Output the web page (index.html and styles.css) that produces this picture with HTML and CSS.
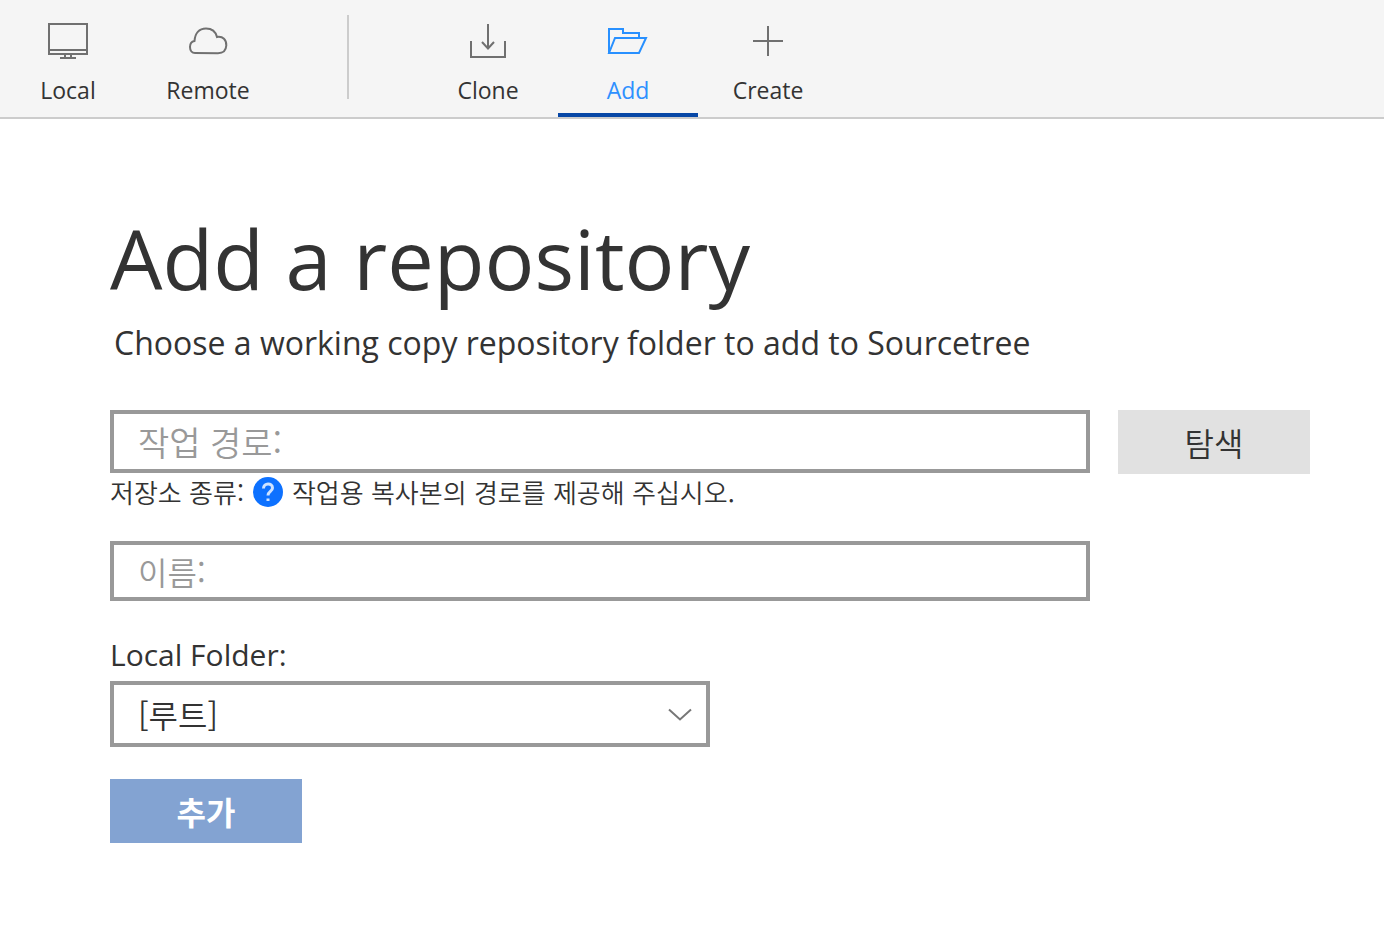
FILE: index.html
```
<!DOCTYPE html>
<html lang="ko">
<head>
    <meta charset="UTF-8">
    <meta name="viewport" content="width=device-width, initial-scale=1.0">
    <title>Sourcetree</title>
    <link rel="stylesheet" href="styles.css">
</head>
<body>
    <nav class="toolbar">
        <a class="tab" href="#local">
            <svg class="icon" width="48" height="40" viewBox="0 0 48 40">
                <path d="M5 4h38v30H5zM5 30h38M21 34v4M27 34v4M16 38h16"/>
            </svg>
            Local
        </a>
        <a class="tab" href="#remote">
            <svg class="icon" width="48" height="40" viewBox="0 0 48 40">
                <path d="M11 33C8 33 6 30.500 6 27C6 23.500 8 21.500 10.500 21C11 13.500 15 8.500 22 8.500C28 8.500 31.500 11 33 17C39 16 42.500 20 42.300 25.500C42 30.500 39 33.200 34 33.200Z"/>
            </svg>
            Remote
        </a>
        <div class="divider"></div>
        <a class="tab" href="#clone">
            <svg class="icon" width="48" height="40" viewBox="0 0 48 40">
                <path d="M7 21v16h34V21M24 4v25M18 22l6 6.500 6-6.500"/>
            </svg>
            Clone
        </a>
        <a class="tab active" href="#add">
            <svg class="icon" width="48" height="40" viewBox="0 0 48 40">
                <path d="M5 33V9h14v4h16v5M5 33l6-15h31l-7 15z"/>
            </svg>
            Add
        </a>
        <a class="tab" href="#create">
            <svg class="icon" width="48" height="40" viewBox="0 0 48 40">
                <path d="M24 6v30M9 21h30"/>
            </svg>
            Create
        </a>
    </nav>

    <main class="content">
        <h1>Add a repository</h1>
        <p class="subtitle">Choose a working copy repository folder to add to Sourcetree</p>

        <form class="repo-form">
            <div class="path-row">
                <input class="text-input path-input" type="text" id="path" aria-label="작업 경로" placeholder="작업 경로:">
                <button class="btn btn-browse" type="button">탐색</button>
            </div>
            <div class="repo-type">
                <span>저장소 종류:</span>
                <svg class="help" width="32" height="32" viewBox="0 0 32 32">
                    <circle cx="16" cy="16" r="15"/>
                    <path d="M11.500 12.500C11.500 6.500 20.500 6.500 20.500 12C20.500 15.500 16 15.500 16 19.500M16 22.500v2.500"/>
                </svg>
                <span>작업용 복사본의 경로를 제공해 주십시오.</span>
            </div>
            <div class="name-row">
                <input class="text-input" type="text" id="name" aria-label="이름" placeholder="이름:">
            </div>
            <label class="folder-label" for="folder">Local Folder:</label>
            <div class="select-wrap">
                <select class="folder-select" id="folder">
                    <option>[루트]</option>
                </select>
                <svg class="chevron" width="24" height="14" viewBox="0 0 24 14">
                    <path d="M1 1.500l11 10 11-10"/>
                </svg>
            </div>
            <button class="btn btn-add" type="submit">추가</button>
        </form>
    </main>
</body>
</html>
```
FILE: styles.css
```
* {
    box-sizing: border-box;
}
body {
    margin: 0;
    font-family: "Open Sans", "Noto Sans CJK KR", sans-serif;
    color: #333;
    background-color: #fff;
}
.toolbar {
    display: flex;
    padding-right: 20px;
    background-color: #f5f5f5;
    border-bottom: 2px solid #ccc;
}
.tab {
    display: flex;
    flex-direction: column;
    align-items: center;
    gap: 12px;
    width: 140px;
    padding-top: 20px;
    padding-bottom: 5px;
    border-bottom: 4px solid transparent;
    font-size: 23px;
    line-height: 36px;
    color: #333;
    text-decoration: none;
}
.tab:first-child {
    margin-left: -2px;
}
.tab.active {
    color: #2e90ff;
    border-bottom-color: #0747a6;
}
.icon {
    fill: none;
    stroke: #707070;
    stroke-width: 2;
}
.active .icon {
    stroke: #2890ff;
}
.divider {
    width: 2px;
    margin: 15px 69px 18px;
    background-color: #ccc;
}
.content {
    padding: 83px 74px 40px 110px;
}
h1 {
    margin: 0;
    font-size: 83px;
    font-weight: 400;
    line-height: 112px;
}
.subtitle {
    margin: 7px 0 45px 4px;
    font-size: 32px;
    line-height: 44px;
}
.repo-form {
    font-family: "Noto Sans CJK KR", sans-serif;
    font-weight: 350;
}
.path-row,
.name-row {
    display: grid;
    grid-template-columns: 1fr 192px;
    column-gap: 28px;
    align-items: start;
}
.text-input {
    width: 100%;
    height: 60px;
    padding: 0 24px;
    border: 4px solid #999;
    border-radius: 0;
    background-color: #fff;
    font-family: inherit;
    font-weight: inherit;
    font-size: 32px;
    color: #333;
}
.path-input {
    height: 63px;
    font-size: 34px;
}
.text-input::placeholder {
    color: #999;
    opacity: 1;
}
.btn {
    width: 192px;
    height: 64px;
    padding: 0;
    border: none;
    font-family: inherit;
    font-weight: inherit;
    font-size: 32px;
    cursor: pointer;
}
.btn-browse {
    background-color: #e1e1e1;
    color: #333;
}
.repo-type {
    display: flex;
    align-items: center;
    gap: 8px;
    height: 36px;
    margin-bottom: 31px;
    font-size: 26px;
    line-height: 36px;
}
.help circle {
    fill: #0d71ff;
}
.help path {
    fill: none;
    stroke: #cfe3ff;
    stroke-width: 3;
}
.folder-label {
    display: block;
    margin-top: 32px;
    font-family: "Open Sans", sans-serif;
    font-size: 30px;
    font-weight: 400;
    line-height: 44px;
}
.select-wrap {
    position: relative;
    max-width: 600px;
    margin: 4px 0 32px;
}
.folder-select {
    display: block;
    width: 100%;
    height: 66px;
    padding: 0 60px 0 24px;
    border: 4px solid #999;
    border-radius: 0;
    background-color: #fff;
    appearance: none;
    font-family: inherit;
    font-weight: inherit;
    font-size: 32px;
    color: #333;
}
.chevron {
    position: absolute;
    right: 18px;
    top: 27px;
    fill: none;
    stroke: #777;
    stroke-width: 2;
    pointer-events: none;
}
.btn-add {
    background-color: #83a3d2;
    color: #fff;
    font-weight: 700;
}
```
